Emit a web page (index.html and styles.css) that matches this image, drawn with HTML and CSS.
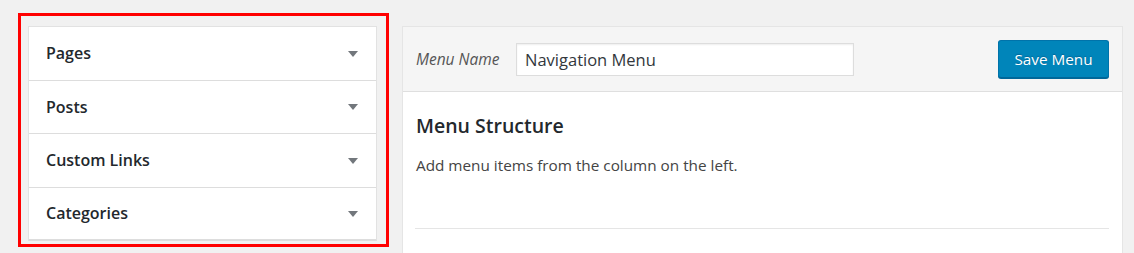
FILE: index.html
```html
<!DOCTYPE html>
<html lang="en">
<head>
<meta charset="utf-8">
<title>Menus</title>
<link rel="stylesheet" href="styles.css">
</head>
<body>
<div class="wrap">
  <div class="highlight">
    <ul class="accordion">
      <li class="section"><h3 class="section-title">Pages</h3><svg class="arrow" width="10" height="6" viewBox="0 0 10 6"><polygon points="0,0 10,0 5,6" /></svg></li>
      <li class="section"><h3 class="section-title">Posts</h3><svg class="arrow" width="10" height="6" viewBox="0 0 10 6"><polygon points="0,0 10,0 5,6" /></svg></li>
      <li class="section"><h3 class="section-title">Custom Links</h3><svg class="arrow" width="10" height="6" viewBox="0 0 10 6"><polygon points="0,0 10,0 5,6" /></svg></li>
      <li class="section"><h3 class="section-title">Categories</h3><svg class="arrow" width="10" height="6" viewBox="0 0 10 6"><polygon points="0,0 10,0 5,6" /></svg></li>
    </ul>
  </div>
  <div class="menu-edit">
    <div class="menu-header">
      <label class="menu-name-label" for="menu-name">Menu Name</label>
      <input class="menu-name" id="menu-name" type="text" value="Navigation Menu">
      <button class="button-primary" type="button">Save Menu</button>
    </div>
    <div class="menu-body">
      <h3 class="structure-title">Menu Structure</h3>
      <p class="structure-hint">Add menu items from the column on the left.</p>
      <hr class="divider">
    </div>
  </div>
</div>
</body>
</html>
```
FILE: styles.css
```css
html, body {
  margin: 0;
  padding: 0;
  background: #f1f1f1;
  overflow: hidden;
}
body {
  font-family: "Open Sans", "Noto Sans", sans-serif;
  color: #444;
}
.wrap {
  display: flex;
  align-items: flex-start;
  padding: 13px 0 0 18px;
}
.highlight {
  border: 3px solid #ff0000;
  padding: 10px 9px 3px 7px;
  width: 349px;
}
.accordion {
  list-style: none;
  margin: 0;
  padding: 0;
  background: #fff;
  border: 1px solid #e2e2e2;
  border-bottom-color: #dcdcdc;
}
.section {
  display: flex;
  align-items: center;
  justify-content: space-between;
  height: 53.5px;
  box-sizing: border-box;
  padding: 0 18px 0 17px;
  border-bottom: 1px solid #dddddd;
}
.section:last-child {
  height: 52px;
}
.section-title {
  margin: 0;
  font-size: 16px;
  font-weight: 600;
  color: #23282d;
}
.arrow {
  display: block;
  fill: #72777c;
  margin-top: 1px;
}
.menu-edit {
  margin: 13px 0 0 13px;
  width: 721px;
  box-sizing: border-box;
  height: 227px;
  background: #fff;
  border: 1px solid #e5e5e5;
  border-bottom: none;
}
.menu-header {
  display: flex;
  align-items: center;
  height: 64px;
  padding: 0 13px;
  background: #f5f5f5;
  border-bottom: 1px solid #dfdfdf;
}
.menu-name-label {
  width: 100px;
  font-size: 15.5px;
  font-style: italic;
  color: #555;
}
.menu-name {
  box-sizing: border-box;
  width: 338px;
  height: 33px;
  margin: 1px 0 0 0;
  padding: 0 8px;
  border: 1px solid #dddddd;
  box-shadow: inset 0 1px 2px rgba(0, 0, 0, 0.07);
  background: #fff;
  font-family: "Open Sans", "Noto Sans", sans-serif;
  font-size: 16.5px;
  color: #32373c;
  outline: none;
}
.button-primary {
  margin-left: auto;
  box-sizing: border-box;
  width: 111px;
  height: 38px;
  padding: 0;
  background: #0085ba;
  border: 1px solid #0073aa;
  border-bottom-color: #006799;
  border-radius: 3px;
  box-shadow: 0 1px 0 #006799;
  color: #fff;
  font-family: "Open Sans", "Noto Sans", sans-serif;
  font-size: 15.3px;
  text-shadow: 0 -1px 1px #006799;
}
.menu-body {
  padding: 0 13px;
}
.structure-title {
  margin: 20px 0 0 0;
  font-size: 19.5px;
  line-height: 28px;
  font-weight: 600;
  color: #23282d;
}
.structure-hint {
  margin: 15px 0 0 0;
  font-size: 15.3px;
  line-height: 20px;
  color: #444;
}
.divider {
  margin: 53px 0 0 -1px;
  border: none;
  border-top: 1px solid #e5e5e5;
  height: 0;
}
```
